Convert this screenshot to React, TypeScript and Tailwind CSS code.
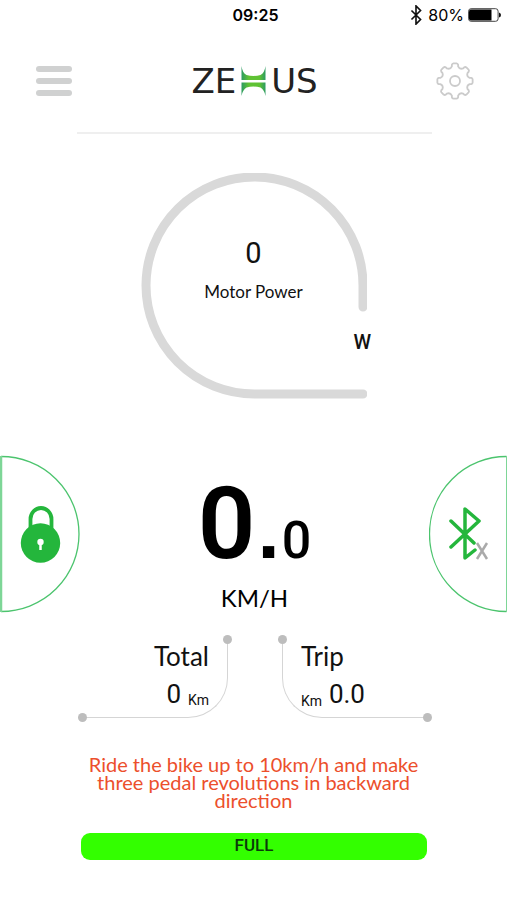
import { useState } from "react";

const bluetoothPath = "M3 6 L13 16 L8 21 V1 L13 6 L3 16";

function polar(radius: number, degrees: number) {
  const angle = (degrees * Math.PI) / 180;
  return `${(19 + radius * Math.cos(angle)).toFixed(2)} ${(19 + radius * Math.sin(angle)).toFixed(2)}`;
}

// eight flat teeth with round notches between them
const gearPath =
  Array.from({ length: 8 }, (_, i) => {
    const a = i * 45;
    return `${i === 0 ? "M" : "L"}${polar(16.5, a - 11)} Q${polar(17.7, a - 9)} ${polar(17.7, a - 5)} L${polar(17.7, a + 5)} Q${polar(17.7, a + 9)} ${polar(16.5, a + 11)} L${polar(15, a + 12)} A4 4 0 0 0 ${polar(15, a + 33)}`;
  }).join(" ") + "Z";

function StatusBar() {
  return (
    <div className="grid h-[30px] grid-cols-3 items-center px-[6px] font-['Inter',sans-serif] text-base text-black">
      <span />
      <span className="pl-1 text-center font-semibold">09:25</span>
      <div className="flex items-center justify-end gap-1">
        <svg width="16" height="20" viewBox="0 0 16 22" fill="none" stroke="#111" strokeWidth="1.8" aria-hidden="true">
          <path d={bluetoothPath} />
        </svg>
        <span>80%</span>
        <svg width="33" height="14" viewBox="0 0 33 14" aria-hidden="true">
          <rect x="0.6" y="0.7" width="29.5" height="12.6" rx="2.5" fill="#fff" stroke="#444" />
          <path d="M3 1.500 H23.500 V12.500 H3 Q1 12.500 1 10.500 V3.500 Q1 1.500 3 1.500Z" fill="#000" />
          <path d="M31 4.500 Q33 5 33 7 Q33 9 31 9.500Z" fill="#111" />
        </svg>
      </div>
    </div>
  );
}

function GearIcon() {
  return (
    <svg width="38" height="38" viewBox="0 0 38 38" fill="none" stroke="#cbcbcb" strokeWidth="1.8" strokeLinejoin="round" aria-hidden="true">
      <path d={gearPath} />
      <circle cx="19" cy="19" r="5" />
    </svg>
  );
}

function Logo() {
  return (
    <h1 className="flex items-center gap-1 font-['DejaVu_Sans',sans-serif] text-[34px] leading-[40px] text-[#222]">
      <span>ZE</span>
      <svg width="27" height="32" viewBox="0 0 26 32" role="img" aria-label="X">
        <defs>
          <linearGradient id="mark" x1="0" x2="1" y1="0" y2="0">
            <stop offset="0" stopColor="#2c9b62" />
            <stop offset="0.3" stopColor="#5fc234" />
            <stop offset="0.75" stopColor="#5fc234" />
            <stop offset="1" stopColor="#2c9b62" />
          </linearGradient>
        </defs>
        <path d="M1 1 Q2 8 6 10 Q13 12 20 10 Q24 8 25 1 V15 H1Z" fill="url(#mark)" />
        <path d="M1 17.500 H25 V31 Q24 25 20 22.500 Q13 20.500 6 22.500 Q2 25 1 31Z" fill="url(#mark)" />
      </svg>
      <span>US</span>
    </h1>
  );
}

function Header() {
  return (
    <header>
      <div className="flex h-[102px] items-center justify-between pl-[35px] pr-[33px]">
        <button aria-label="Menu" className="flex w-[38px] flex-col gap-[6px] px-px">
          <span className="h-[6px] w-full rounded-full bg-[#d0d1d1]" />
          <span className="h-[6px] w-full rounded-full bg-[#d0d1d1]" />
          <span className="h-[6px] w-full rounded-full bg-[#d0d1d1]" />
        </button>
        <Logo />
        <button aria-label="Settings">
          <GearIcon />
        </button>
      </div>
      <hr className="ml-[77px] mr-[75px] border-t-2 border-[#efefef]" />
    </header>
  );
}

function PowerGauge({ watts }: { watts: number }) {
  return (
    <section className="relative mx-auto mt-[39px] h-[227px] w-[227px] text-center text-[#111]">
      <svg className="absolute inset-0" width="227" height="227" viewBox="0 0 227 227" fill="none" aria-hidden="true">
        <path
          d="M223 134 V113.500 A108.500 108.500 0 1 0 114.500 221 H223"
          stroke="#d9d9d9"
          strokeWidth="9"
          strokeLinecap="round"
        />
      </svg>
      <div className="relative flex flex-col items-center pt-[64px]">
        <span className="font-['Roboto',sans-serif] text-[29px] leading-[32px]">{watts}</span>
        <span className="mt-[11px] font-['Lato',sans-serif] text-[17px] leading-[24px]">Motor Power</span>
      </div>
      <span className="absolute -right-[4px] top-[156px] font-['Roboto',sans-serif] text-[20px] font-medium leading-[26px]">W</span>
    </section>
  );
}

function LockButton() {
  return (
    <button aria-label="Lock bike">
      <svg width="80" height="158" viewBox="0 0 80 158" fill="none" aria-hidden="true">
        <path d="M1 1.500 A78 77.500 0 0 1 1 156.500" stroke="#4cc46e" strokeWidth="1.3" />
        <path d="M1 1 V157" stroke="#7ed697" strokeWidth="2.500" />
        <path d="M30.500 79 V64 A10.500 11 0 0 1 51.500 64 V79" stroke="#24b63c" strokeWidth="3.800" />
        <circle cx="40.500" cy="88" r="19.700" fill="#24b63c" />
        <circle cx="40.500" cy="87" r="3.200" fill="#fff" />
        <path d="M40.500 88 V95" stroke="#fff" strokeWidth="2.500" />
      </svg>
    </button>
  );
}

function BluetoothButton() {
  return (
    <button aria-label="Bluetooth disconnected">
      <svg width="78" height="158" viewBox="0 0 78 158" fill="none" aria-hidden="true">
        <path d="M77.500 1.500 A77 77.500 0 0 0 77.500 156.500" stroke="#4cc46e" strokeWidth="1.300" />
        <path d="M77.500 1 V157" stroke="#7ed697" />
        <path
          d="M22 66 L45 88 M22 92 L50 66 L36 54 V103 L46 95"
          stroke="#24b63c"
          strokeWidth="3.500"
          strokeLinecap="round"
          strokeLinejoin="round"
        />
        <path d="M48 88 L58 104 M58 88 L48 104" stroke="#aaa" strokeWidth="2.500" />
      </svg>
    </button>
  );
}

function Speed() {
  return (
    <div className="flex flex-col items-center pt-[19px] text-black">
      <div className="flex items-baseline font-['Roboto',sans-serif] font-semibold leading-[100px]">
        <span className="text-[101px]">0</span>
        <span className="px-0.5 font-['Liberation_Sans',sans-serif] text-[80px] font-bold">.</span>
        <span className="text-[52px] font-medium">0</span>
      </div>
      <span className="-mt-[8px] font-['Lato',sans-serif] text-[24px] leading-[30px]">KM/H</span>
    </div>
  );
}

function Distances() {
  const dot = "absolute size-[9px] rounded-full bg-[#bdbdbd]";
  return (
    <section className="mt-[27px] grid grid-cols-2 gap-[54px] pl-[83px] pr-[80px] text-[#111]">
      <div className="relative h-[78px] rounded-br-[40px] border-b border-r border-[#d5d5d5] pr-[18px] text-right">
        <span className={`${dot} -right-[5px] -top-[5px]`} />
        <span className={`${dot} -bottom-[5px] -left-[5px]`} />
        <h2 className="font-['Lato',sans-serif] text-[26px] leading-[32px]">Total</h2>
        <p className="mt-[6px] flex items-end justify-end gap-[7px] font-['Roboto',sans-serif]">
          <span className="text-[26px] leading-[32px]">0</span>
          <span className="text-sm leading-[20px]">Km</span>
        </p>
      </div>
      <div className="relative h-[78px] rounded-bl-[40px] border-b border-l border-[#d5d5d5] pl-[18px]">
        <span className={`${dot} -left-[5px] -top-[5px]`} />
        <span className={`${dot} -bottom-[5px] -right-[5px]`} />
        <h2 className="font-['Lato',sans-serif] text-[26px] leading-[32px]">Trip</h2>
        <p className="mt-[6px] flex items-end gap-[7px] font-['Roboto',sans-serif]">
          <span className="text-sm leading-[18px]">Km</span>
          <span className="text-[26px] leading-[32px]">0.0</span>
        </p>
      </div>
    </section>
  );
}

export default function App() {
  const [watts] = useState(0);

  return (
    <main className="min-h-screen bg-white pb-[38px]">
      <StatusBar />
      <Header />
      <PowerGauge watts={watts} />
      <section className="mt-[55px] flex items-start justify-between">
        <LockButton />
        <Speed />
        <BluetoothButton />
      </section>
      <Distances />
      <p className="mx-[80px] mt-[37px] text-center font-['Lato',sans-serif] text-[20px] leading-[18px] text-[#ec4f2c]">
        Ride the bike up to 10km/h and make three pedal revolutions in backward direction
      </p>
      <div className="ml-[81px] mr-[80px] mt-[24px] rounded-[9px] bg-[#33ff00] pb-[2px] text-center font-['Roboto',sans-serif] text-[17px] font-medium leading-[25px] text-[#0a3a0a]">
        FULL
      </div>
    </main>
  );
}
